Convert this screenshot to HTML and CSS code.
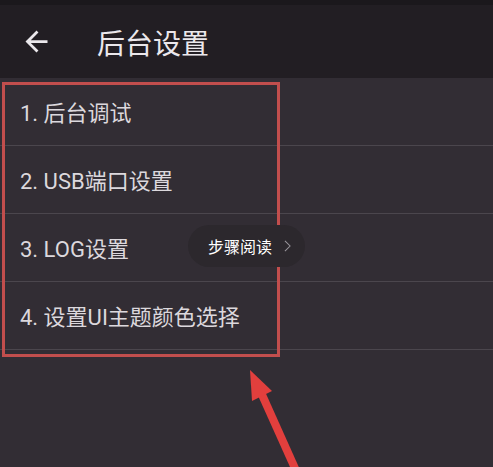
FILE: index.html
```html
<!DOCTYPE html>
<html lang="zh">
<head>
<meta charset="utf-8">
<link rel="stylesheet" href="styles.css">
</head>
<body>
<div class="screen">
  <div class="statusbar"></div>
  <header class="appbar">
    <svg class="back" viewBox="0 0 24 24"><path d="M20 11H7.83l5.59-5.59L12 4l-8 8 8 8 1.41-1.41L7.83 13H20v-2z" fill="#ebe8ec"/></svg>
    <h1 class="title">后台设置</h1>
  </header>
  <ul class="list">
    <li class="row">1. 后台调试</li>
    <li class="row">2. USB端口设置</li>
    <li class="row">3. LOG设置</li>
    <li class="row">4. 设置UI主题颜色选择</li>
  </ul>
  <div class="highlight"></div>
  <div class="pill"><span>步骤阅读</span><svg class="chev" viewBox="0 0 8 14"><path d="M1 1l6 6-6 6" fill="none" stroke="#9a969c" stroke-width="1.2"/></svg></div>
  <svg class="arrow" viewBox="0 0 493 467">
    <line x1="259" y1="388" x2="298" y2="475" stroke="#e23f3d" stroke-width="8"/>
    <polygon points="250,370 272,391 252,401" fill="#e23f3d"/>
  </svg>
</div>
</body>
</html>
```
FILE: styles.css
```css
html, body {
  margin: 0;
  padding: 0;
  background: #322d34;
}
.screen {
  position: relative;
  width: 493px;
  height: 467px;
  overflow: hidden;
  font-family: "Roboto", "Noto Sans CJK SC", sans-serif;
  color: #dcd8dd;
}
.statusbar {
  height: 5px;
  background: #1b181c;
}
.appbar {
  height: 73px;
  background: #221e23;
  display: flex;
  align-items: center;
}
.back {
  width: 33px;
  height: 33px;
  margin-left: 20px;
}
.title {
  margin: 0 0 0 44px;
  font-size: 28px;
  font-weight: 400;
  color: #ebe8ec;
}
.list {
  list-style: none;
  margin: 0;
  padding: 0;
}
.row {
  height: 67px;
  border-bottom: 1px solid #4b464d;
  display: flex;
  align-items: center;
  padding-left: 20px;
  padding-bottom: 2px;
  box-sizing: border-box;
  height: 68px;
  font-size: 22px;
}
.highlight {
  position: absolute;
  left: 2px;
  top: 82px;
  width: 272px;
  height: 269px;
  border: 3px solid #c24e4d;
}
.pill {
  position: absolute;
  left: 188px;
  top: 225px;
  width: 117px;
  height: 42px;
  border-radius: 21px;
  background: #2c282d;
  display: flex;
  align-items: center;
  padding-left: 20px;
  box-sizing: border-box;
  font-size: 16px;
  color: #ffffff;
}
.chev {
  width: 7px;
  height: 12px;
  margin-left: 12px;
}
.arrow {
  position: absolute;
  left: 0;
  top: 0;
  width: 493px;
  height: 467px;
}
```
